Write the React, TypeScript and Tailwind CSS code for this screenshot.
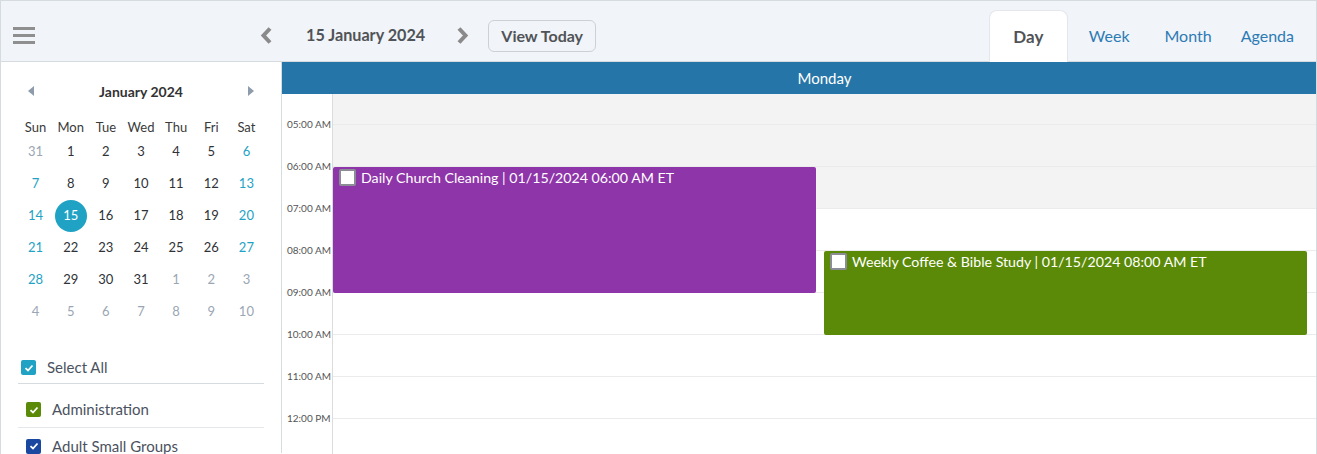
import React from 'react';

const FONT = { fontFamily: 'Lato, "Open Sans", Arial, sans-serif' };

type Cell = { d: number; kind: 'out' | 'wk' | 'we' | 'sel' };

const weeks: Cell[][] = (() => {
  const rows: Cell[][] = [];
  const days: Cell[] = [];
  days.push({ d: 31, kind: 'out' });
  for (let i = 1; i <= 31; i++) days.push({ d: i, kind: 'wk' });
  for (let i = 1; i <= 10; i++) days.push({ d: i, kind: 'out' });
  days.forEach((c, idx) => {
    const col = idx % 7;
    if (c.kind === 'wk' && (col === 0 || col === 6)) c.kind = 'we';
    if (c.kind === 'wk' && c.d === 15) c.kind = 'sel';
  });
  for (let r = 0; r < 6; r++) rows.push(days.slice(r * 7, r * 7 + 7));
  return rows;
})();

const hours = ['05:00 AM', '06:00 AM', '07:00 AM', '08:00 AM', '09:00 AM', '10:00 AM', '11:00 AM', '12:00 PM'];

function Chevron({ dir }: { dir: 'left' | 'right' }) {
  return (
    <svg width="13" height="19" viewBox="0 0 13 19">
      <polyline
        points={dir === 'left' ? '10,2.5 3.5,9.5 10,16.5' : '3,2.5 9.5,9.5 3,16.5'}
        fill="none"
        stroke="#8a8a8a"
        strokeWidth="4"
        strokeLinejoin="miter"
      />
    </svg>
  );
}

function Check({ color }: { color: string }) {
  return (
    <span className="flex h-[15px] w-[15px] items-center justify-center rounded-[2px]" style={{ background: color }}>
      <svg width="10" height="10" viewBox="0 0 10 10">
        <polyline points="1.5,5.2 4,7.5 8.5,2.5" fill="none" stroke="#fff" strokeWidth="1.8" />
      </svg>
    </span>
  );
}

function EventBox({ title, className }: { title: string; className: string }) {
  return (
    <div className={`absolute flex items-start rounded-[2px] pl-[6px] pt-[2px] text-[14.2px] text-white ${className}`}>
      <span className="h-[17px] w-[17px] shrink-0 rounded-[2px] border-2 border-[#8c8c96] bg-white" />
      <span className="ml-[5px] leading-[17px]">{title}</span>
    </div>
  );
}

export default function App() {
  return (
    <div className="h-[454px] w-[1317px] overflow-hidden border-x border-[#d6dbe0] bg-white" style={FONT}>
      {/* top bar */}
      <div className="flex h-[62px] border-y border-[#d6dbe0] bg-[#f1f4f8] pt-[9px]">
        <div className="flex flex-1 items-center">
          <div className="ml-[12px] flex w-[22px] flex-col gap-[4px]">
            <span className="h-[3px] bg-[#8f8f8f]" />
            <span className="h-[3px] bg-[#8f8f8f]" />
            <span className="h-[3px] bg-[#8f8f8f]" />
          </div>
          <div className="ml-[225px]">
            <Chevron dir="left" />
          </div>
          <span className="ml-[33px] text-[16.2px] font-bold text-[#505357]">15 January 2024</span>
          <div className="ml-[31px]">
            <Chevron dir="right" />
          </div>
          <button className="ml-[19px] h-[32px] rounded-[6px] border border-[#cdd1d6] px-[12px] text-[16px] font-bold text-[#505357]">
            View Today
          </button>
        </div>
        <div className="flex items-stretch text-[16px]">
          <div className="-mb-px flex h-[53px] w-[79px] items-center justify-center rounded-t-[8px] border border-b-0 border-[#e3e7eb] bg-white text-[17px] font-bold text-[#505357]">
            Day
          </div>
          <span className="ml-[21px] flex items-center text-[#2c7bb5]">Week</span>
          <span className="ml-[35px] flex items-center text-[#2c7bb5]">Month</span>
          <span className="ml-[29px] mr-[22px] flex items-center text-[#2c7bb5]">Agenda</span>
        </div>
      </div>

      <div className="flex h-[391px]">
        {/* sidebar */}
        <div className="w-[281px] shrink-0 border-r border-[#d6dbe0]">
          <div className="mx-[17px] mt-[19px] flex h-[20px] items-center justify-between px-[10px]">
            <svg width="7" height="10" viewBox="0 0 7 10"><polygon points="6,0 0,5 6,10" fill="#8d9bab" /></svg>
            <span className="text-[14px] font-bold text-[#333]">January 2024</span>
            <svg width="7" height="10" viewBox="0 0 7 10"><polygon points="1,0 7,5 1,10" fill="#8d9bab" /></svg>
          </div>
          <div className="mx-[17px] mt-[17px] grid h-[18px] grid-cols-7 items-center text-center text-[13px] text-[#3a3a3a]">
            {['Sun', 'Mon', 'Tue', 'Wed', 'Thu', 'Fri', 'Sat'].map((d) => (
              <span key={d}>{d}</span>
            ))}
          </div>
          <div className="mx-[17px]">
            {weeks.map((row, r) => (
              <div key={r} className="grid h-[32px] grid-cols-7 items-center text-center text-[13px]">
                {row.map((c, i) => (
                  <div key={i} className="flex justify-center">
                    {c.kind === 'sel' ? (
                      <span className="flex h-[32px] w-[32px] items-center justify-center rounded-full bg-[#1fa2c4] text-white">{c.d}</span>
                    ) : (
                      <span
                        className={
                          c.kind === 'out' ? 'text-[#9aa6b4]' : c.kind === 'we' ? 'text-[#1fa2c4]' : 'text-[#2f3236]'
                        }
                      >
                        {c.d}
                      </span>
                    )}
                  </div>
                ))}
              </div>
            ))}
          </div>
          <div className="mx-[17px] mt-[24px] text-[15px] text-[#4b5260]">
            <div className="flex h-[32px] items-center border-b border-[#d6dbe0] pl-[3px]">
              <Check color="#1fa2c4" />
              <span className="ml-[11px]">Select All</span>
            </div>
            <div className="mt-[8px] flex h-[36px] items-center border-b border-[#e6e9ec] pl-[8px]">
              <Check color="#5b8a08" />
              <span className="ml-[11px]">Administration</span>
            </div>
            <div className="flex h-[36px] items-center pl-[8px]">
              <Check color="#1a48a0" />
              <span className="ml-[11px]">Adult Small Groups</span>
            </div>
          </div>
        </div>

        {/* day view */}
        <div className="flex flex-1 flex-col">
          <div className="flex h-[32px] shrink-0 bg-[#2675a8] text-[15px] text-white">
            <div className="w-[51px]" />
            <div className="flex flex-1 items-center justify-center">Monday</div>
          </div>
          <div className="flex flex-1">
            <div className="w-[51px] shrink-0 border-r border-[#dcdcdc] pt-[30px] text-[10px] text-[#555]">
              {hours.map((h) => (
                <div key={h} className="h-[42px]">
                  <div className="-translate-y-1/2 pl-[5px] leading-[12px]">{h}</div>
                </div>
              ))}
            </div>
            <div className="relative flex-1">
              <div className="h-[30px] bg-[#f3f3f3]" />
              {hours.map((h, i) => (
                <div key={h} className={`h-[42px] border-t border-[#ebebeb] ${i < 2 ? 'bg-[#f3f3f3]' : ''}`} />
              ))}
              <EventBox
                title="Daily Church Cleaning | 01/15/2024 06:00 AM ET"
                className="left-0 top-[73px] h-[126px] w-[483px] bg-[#8e35a9]"
              />
              <EventBox
                title="Weekly Coffee & Bible Study | 01/15/2024 08:00 AM ET"
                className="left-[491px] top-[157px] h-[84px] w-[483px] bg-[#5b8a08]"
              />
            </div>
          </div>
        </div>
      </div>
    </div>
  );
}
